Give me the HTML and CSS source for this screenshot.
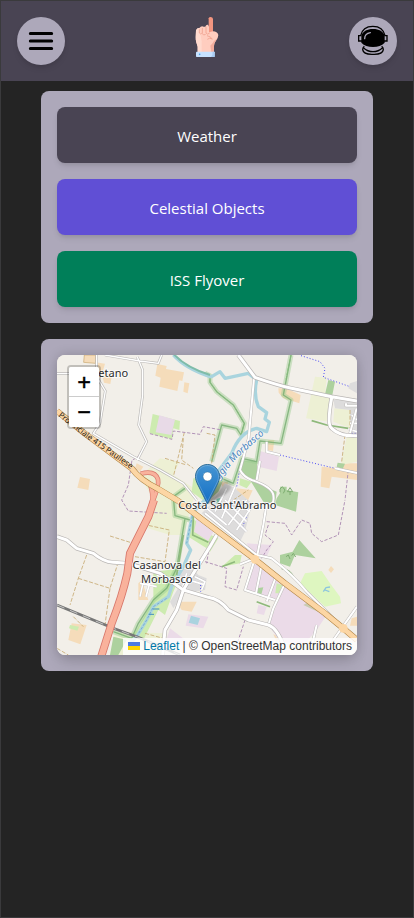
FILE: index.html
```html
<!DOCTYPE html>
<html lang="en">
<head>
<meta charset="utf-8">
<meta name="viewport" content="width=device-width, initial-scale=1">
<title>Sky Guide</title>
<link rel="stylesheet" href="styles.css">
</head>
<body>
<header class="topbar">
  <button class="round-button" type="button" aria-label="Menu">
    <svg class="icon" viewBox="75 75 96 96" aria-hidden="true"><g stroke="#000" stroke-width="9" stroke-linecap="round"><path d="M91 100.500H155M91 123H155M91 145.500H155"/></g></svg>
  </button>
  <svg class="logo" viewBox="21 51 120 120" aria-hidden="true">
    <path fill="#f29580" d="M86 55Q87 51 92 51Q98 51 99 56V96L86 110Z"/>
    <path fill="#ffcdbf" d="M76 80Q78 73 84 74L87 80V97L99 94Q112 94 115 105Q115 115 106 125Q102 130 102 138V156H53V140L47 119L48 91Q51 84 58 84Q64 76 71 80Z"/>
    <path fill="#ffdace" d="M53 140Q47 128 47 112L48 91Q51 84 58 84L65 124V156H53Z"/>
    <path fill="#f3ad9d" d="M91 137Q99 130 102 123Q107 118 111 116Q102 128 102 138V156H94Z"/>
    <path fill="none" stroke="#efa18e" stroke-width="2.500" d="M58 88V99Q61 104 65 100M67 84V101Q70 108 77 103M78 80V99Q82 106 89 99M81 107Q91 109 97 117Q88 112 82 118"/>
    <rect x="48" y="155" width="56" height="16" rx="2" fill="#c7e2ff"/>
    <path fill="#a8ccf3" d="M98 155H104V171H93Q99 165 98 155Z"/>
    <circle cx="59" cy="163" r="2.500" fill="#4aa1e4"/>
  </svg>
  <button class="round-button" type="button" aria-label="Profile">
    <svg class="icon" viewBox="69 75 96 96" aria-hidden="true">
      <g fill="none" stroke="#000" stroke-width="4">
        <path d="M80 107Q86 79 116.500 79Q147 79 153 107M82 107H74V123H84M151 107H159V123H149M91 139Q86 143 86 149Q88 164 117 163Q146 164 148 149Q148 143 143 139"/>
        <path d="M88 143Q101 155 117 155Q133 155 146 143"/>
      </g>
      <path d="M117 87C136 87 145 94 152 105V128C143 137 132 141 117 141C102 141 91 137 82 128V105C89 94 98 87 117 87Z"/>
      <path d="M92 116Q92 101 109 98" fill="none" stroke="#ada8ba" stroke-width="4" stroke-linecap="round"/>
    </svg>
  </button>
</header>
<main class="content">
  <nav class="card menu" aria-label="Sections">
    <button class="action weather" type="button">Weather</button>
    <button class="action celestial" type="button">Celestial Objects</button>
    <button class="action iss" type="button">ISS Flyover</button>
  </nav>
  <section class="card" aria-label="Location map">
    <div class="map">
      <svg class="tiles" viewBox="21 30 900 900" preserveAspectRatio="xMidYMid slice">
        <defs>
          <path id="highway" d="M21 198L100 262L245 370Q270 405 325 432L385 468L465 530L615 643L705 715L825 805L880 850L921 885"/>
          <path id="motorway" d="M312 465L295 515L240 625L232 685Q217 753 185 835L152 940"/>
          <path id="slip" d="M272 386Q315 375 324 403Q328 420 308 470M300 420Q310 440 306 480"/>
          <path id="town-road" d="M21 575L50 585L80 610L130 625Q160 650 190 652L235 655L330 685L400 735L475 757Q510 763 535 795L595 825L655 840Q680 848 700 900"/>
          <path id="north-road" d="M565 30Q595 70 615 97Q680 120 725 130L845 155L921 168M845 158Q830 240 845 250Q870 275 921 272"/>
          <path id="south-road" d="M500 570L480 605L430 685L400 735L380 795L345 855L338 930"/>
          <path id="lanes" d="M21 86H103M140 30V95L166 138L150 235L130 265L250 335L330 375L400 415L440 465M165 30L270 48L325 55L335 30M262 36L278 75V150L266 240L290 290L262 345"/>
          <path id="east-lanes" d="M612 100L596 280L570 375Q580 395 605 405Q665 425 670 450Q675 485 650 475L640 540L620 640M630 348L620 405M650 290V320L690 330M855 370L921 384M888 175V182H921M920 190L900 265M615 640L585 735L675 765M635 660L618 745M680 690L650 770M705 715L670 790L655 840M465 505L620 630L665 640Q730 690 770 740L860 830M800 840L785 905M921 785L850 885M615 640L570 658"/>
          <path id="streets" d="M505 475L590 560M525 465L590 530M530 430L495 500M550 465L600 500M535 540L590 465M560 555L605 485M515 520L555 425M470 490L530 540M270 715L320 725M280 710L270 755M300 710L288 755M320 690L390 715M410 685L395 735M435 695L465 710L455 735M400 700L460 718M900 235H921M905 210L921 225M895 252L921 260"/>
          <path id="river" d="M370 30Q405 70 480 95L485 95L510 80L525 100L595 85L620 105Q610 150 625 185L650 203L645 222L658 232L650 260L620 250Q570 260 545 325L500 385L465 465L430 500L420 545L410 595L422 615L400 665L365 725L355 755L310 785L290 825L260 875L240 895"/>
          <path id="reserve" d="M723 30L700 150L723 165L693 295L630 288L620 350L575 340L550 415L515 400M465 85L480 92V112L500 140L550 180L583 235L573 270L560 250L515 240L485 350M405 430L370 455L375 512L420 525M405 520L380 670L350 730L310 765L265 835L245 880L190 860"/>
          <path id="rail" d="M21 780L190 850L265 877L390 930"/>
          <path id="highway-label" d="M24 213L104 275L260 385"/>
          <path id="river-label" d="M508 404L560 340L665 248"/>
        </defs>
        <rect x="21" y="30" width="900" height="900" fill="#f2efe9"/>
        <g fill="#f5dcba">
          <path stroke="#c9a66b" stroke-width="2" d="M103 30H137V55L101 52Z"/>
          <path d="M137 52L165 56L158 80L185 95L181 117L162 113L156 91L137 80ZM322 57L350 63L348 72L402 82L397 108L388 106L382 138L328 125L332 98L316 92ZM403 112L418 115L413 145L400 140ZM90 396L120 402L115 435L82 428ZM685 130H708L752 150L748 175L700 160L686 143ZM655 285H673L669 318L652 315ZM815 365L865 370L880 355L921 355V405L845 395L838 430L812 425ZM560 430L608 436L590 475L555 460ZM65 835L110 840L91 898L55 885ZM265 715L275 705L295 765H265ZM380 770H440L425 800L395 795ZM843 663L852 673L843 684L835 675ZM670 868L690 875L680 890ZM905 820L921 815V842H900ZM510 410H535L525 440ZM260 355L280 365L270 380L255 370Z"/>
        </g>
        <g fill="#ebdbe8">
          <path d="M440 520L490 560L475 590L425 555ZM590 595L665 600L650 635L610 630ZM615 655L705 717L675 765L585 735ZM705 720L830 810L800 855L760 900L690 890L655 840ZM630 318L687 335L680 378L625 365ZM415 808L475 815L460 850L407 842ZM360 850L425 900H345ZM625 780L650 785L642 810L620 805Z"/>
        </g>
        <g fill="#edf0d4">
          <path d="M330 340L388 352L370 390L440 435L430 465L400 570H360L280 545L315 470L270 395ZM795 95L830 98L825 150L850 160L837 230L768 220ZM853 190L903 195L901 250L850 230ZM890 275H921V350L873 360ZM195 860L340 865V930H180Z"/>
        </g>
        <g fill="#cdebb0">
          <path d="M308 207L390 228L388 255L370 250L366 283L298 265ZM430 400H475L465 470L425 440ZM425 515L480 570L470 610L415 575ZM310 680L400 670L370 740L345 810L325 795L280 885L245 880L310 765ZM570 400L605 410L590 430L568 420ZM680 715L697 720L686 745H676ZM465 590L482 570L505 580L480 620ZM60 840L87 845L82 857L57 850ZM555 630L575 630L570 655L515 665Z"/>
          <path fill="#def6c0" d="M765 685L815 678L840 715L870 755L873 775L825 785L750 715Z"/>
        </g>
        <path fill="#e8dae7" d="M328 211L375 224L364 270L317 262Z"/>
        <path fill="#ebdbe8" d="M440 525L488 562L475 588L432 560Z"/>
        <g fill="#add19e">
          <path d="M835 105L855 110L847 150L825 148ZM575 345L622 350L620 405L595 400L570 375ZM690 425H710V435L745 442L738 500L675 480L680 460L690 445ZM690 630L728 620L748 585L797 640L735 630L720 665L690 655ZM620 730L640 727L632 755L617 748ZM863 353L885 356L878 372L860 365ZM190 875L230 885L205 930H180ZM470 410L520 405L505 440L470 470ZM600 405L680 440L675 480L640 470Z"/>
          <path fill="#c9cbb2" d="M760 780L785 765L830 805L810 803Z"/>
        </g>
        <g fill="#dddcdc">
          <path d="M480 480L525 415L555 430L605 475L585 560L570 590L455 505ZM900 115L921 108V270H900V195L855 190L850 165H921V145L895 130ZM375 680L425 665L445 690L470 700L465 735L400 745L370 790L360 770L390 720Z"/>
        </g>
        <path fill="#aad3df" d="M423 812L450 820L443 840L416 833Z"/>
        <path fill="#72b7a4" d="M500 462L517 457L512 477H497Z"/>
        <g fill="none" stroke-linejoin="round">
          <use href="#reserve" stroke="#9ccb90" stroke-opacity=".45" stroke-width="15"/>
          <use href="#reserve" stroke="#76ad70" stroke-opacity=".8" stroke-width="4"/>
          <path stroke="#85bc7b" stroke-width="3" stroke-dasharray="9 4" d="M465 86L480 95V112L500 140L550 180L583 235L573 270M723 30L708 105"/>
          <use href="#river" stroke="#a9d4de" stroke-width="10"/>
          <path stroke="#7fbca9" stroke-width="6" d="M370 26Q405 66 480 90"/>
          <path stroke="#79aed0" stroke-width="3" stroke-dasharray="8 5" d="M430 500L420 545L410 595M350 760L310 785L290 825L260 875"/>
          <g stroke="#8eb97b" stroke-width="5"><path d="M430 515L428 570L475 592M400 570L380 690M785 227L830 240L895 250M695 670Q720 675 730 695M515 665L555 650M620 770L660 785"/></g>
          <g stroke="#c6aa72" stroke-width="2.500" stroke-dasharray="12 5">
            <path d="M180 573L250 595M110 630L85 700L60 780M85 700L180 730L202 660M180 730L165 840M70 815L100 845M255 635L345 650L358 555L290 540M403 262L370 395M400 280L395 345L430 370M345 340L410 360M21 910L55 930M900 195V250M885 270L875 350M470 265L495 270L485 355M285 865L340 880M550 465L595 435"/>
          </g>
          <g stroke="#b294b7" stroke-width="3" stroke-dasharray="10 5">
            <path d="M290 290L262 338L246 345L235 420L215 465L235 498L350 505M300 266L366 283L370 258L450 268L460 245L515 255M650 530L705 535L725 570L755 525L780 535L785 565L815 590L865 570L885 465M895 375L885 465M655 540L645 570L670 590L650 615L635 640M465 650L530 670L525 725L560 735L580 665M480 590L470 655M515 770L535 795L585 825L560 900"/>
          </g>
          <g stroke="#4c4cf4" stroke-width="3" stroke-dasharray="3 6">
            <path d="M753 32L810 50L825 70L820 97L900 125M690 330L855 370M592 290L570 370L560 425M595 500L578 545M905 265H921M452 720V740"/>
          </g>
          <use href="#rail" stroke="#777" stroke-width="8"/>
          <use href="#rail" stroke="#efefef" stroke-width="2" stroke-dasharray="24 18"/>
          <use href="#streets" stroke="#c5c3c5" stroke-width="7"/>
          <use href="#streets" stroke="#fff" stroke-width="5"/>
          <use href="#lanes" stroke="#bdbbb9" stroke-width="8"/>
          <use href="#lanes" stroke="#fff" stroke-width="4"/>
          <use href="#east-lanes" stroke="#bdbbb9" stroke-width="9"/>
          <use href="#east-lanes" stroke="#fff" stroke-width="6"/>
          <use href="#town-road" stroke="#b9b6b4" stroke-width="13"/>
          <use href="#south-road" stroke="#b9b6b4" stroke-width="13"/>
          <use href="#north-road" stroke="#b9b6b4" stroke-width="13"/>
          <use href="#town-road" stroke="#fff" stroke-width="9"/>
          <use href="#south-road" stroke="#fff" stroke-width="9"/>
          <use href="#north-road" stroke="#fff" stroke-width="9"/>
          <use href="#slip" stroke="#d7776b" stroke-width="14"/>
          <use href="#slip" stroke="#f9b29c" stroke-width="10"/>
          <use href="#highway" stroke="#b08242" stroke-width="18"/>
          <use href="#highway" stroke="#fcd6a4" stroke-width="15"/>
          <use href="#motorway" stroke="#d7776b" stroke-width="24"/>
          <use href="#motorway" stroke="#f9b29c" stroke-width="19"/>
          <path stroke="#f9b29c" stroke-width="10" d="M308 435L306 490"/>
          <path stroke="#418fbe" stroke-width="3" d="M308 792H328M296 808H312"/>
          <path stroke="#8dc5dd" stroke-width="4" d="M820 740L828 728L840 726M825 735L838 740"/>
          <path stroke="#7eac71" stroke-width="3" d="M690 442V432L697 425L705 435L700 445M712 440L720 428L728 440ZM720 440V450M708 635L715 630L720 642M725 632L730 625L737 636"/>
        </g>
        <circle cx="615" cy="643" r="13" fill="#fcd6a4"/>
        <circle cx="880" cy="850" r="13" fill="#fcd6a4"/>
        <g class="place">
          <text x="145" y="95">etano</text>
          <text x="532" y="493" text-anchor="middle">Costa Sant'Abramo</text>
          <text x="350" y="671" text-anchor="middle">Casanova del</text>
          <text x="350" y="714" text-anchor="middle">Morbasco</text>
        </g>
        <text class="road-name"><textPath href="#highway-label">Provinciale 415 Paullese</textPath></text>
        <text class="river-name"><textPath href="#river-label">ggia Morbasco</textPath></text>
      </svg>
      <svg class="pin" viewBox="0 0 41 41" aria-label="Selected location" role="img">
        <defs>
          <linearGradient id="pin-fill" x1="0" y1="0" x2="0" y2="1"><stop offset="0" stop-color="#4695d2"/><stop offset="1" stop-color="#126fc6"/></linearGradient>
          <linearGradient id="pin-shadow" x1="0" y1="1" x2="1" y2="0"><stop offset="0" stop-opacity=".5"/><stop offset="1" stop-opacity=".1"/></linearGradient>
          <filter id="soften"><feGaussianBlur stdDeviation="1"/></filter>
        </defs>
        <path fill="url(#pin-shadow)" filter="url(#soften)" d="M12 40L18 25Q23 16 33 17Q40 20 34 27Q29 32 12 40Z"/>
        <path fill="url(#pin-fill)" stroke="#2e6c97" d="M12.500.500C5.900.500.500 5.900.500 12.500C.500 15.200 1.300 17.700 3 21L12.500 40L22 21C23.700 17.700 24.500 15.200 24.500 12.500C24.500 5.900 19.100.500 12.500.500Z"/>
        <path fill="none" stroke="#fff" stroke-opacity=".2" d="M12.500 1.500C6.400 1.500 1.500 6.400 1.500 12.500C1.500 15 2.300 17.500 4 20.600L12.500 37.500L21 20.600C22.700 17.500 23.500 15 23.500 12.500C23.500 6.400 18.600 1.500 12.500 1.500Z"/>
        <circle cx="12.500" cy="12.500" r="4.500" fill="#fff" stroke="#2e6c97" stroke-opacity=".5"/>
      </svg>
      <div class="zoom">
        <button type="button" aria-label="Zoom in">+</button>
        <button type="button" aria-label="Zoom out">−</button>
      </div>
      <div class="attribution">
        <a href="https://leafletjs.com"><svg class="flag" viewBox="0 0 12 8" aria-hidden="true"><path fill="#4c7be1" d="M0 0h12v4H0z"/><path fill="#ffd500" d="M0 4h12v4H0z"/></svg> Leaflet</a> | © OpenStreetMap contributors
      </div>
    </div>
  </section>
</main>
</body>
</html>
```
FILE: styles.css
```css
* {
  box-sizing: border-box;
}

body {
  margin: 0;
  min-height: 100vh;
  border: 1px solid #3a3a3c;
  background: #242424;
  font-family: "Open Sans", "Noto Sans", sans-serif;
}

button {
  border: 0;
  cursor: pointer;
}

.topbar {
  display: flex;
  align-items: center;
  justify-content: space-between;
  height: 80px;
  padding: 0 16px;
  background: #494453;
}

.round-button {
  display: grid;
  place-items: center;
  width: 48px;
  height: 48px;
  padding: 0;
  border-radius: 50%;
  background: #ada8ba;
  box-shadow: 0 4px 6px -1px rgb(0 0 0 / 10%), 0 2px 4px -2px rgb(0 0 0 / 10%);
}

.icon {
  width: 32px;
  height: 32px;
}

.logo {
  width: 40px;
  height: 40px;
  margin-bottom: 8px;
}

.content {
  display: flex;
  flex-direction: column;
  gap: 16px;
  padding: 10px 40px;
}

.card {
  padding: 16px;
  border-radius: 8px;
  background: #ada8ba;
}

.menu {
  display: flex;
  flex-direction: column;
  gap: 16px;
}

.action {
  height: 56px;
  padding: 2px 16px 0;
  border-radius: 8px;
  color: #fff;
  font-family: inherit;
  font-size: 15px;
  line-height: 24px;
  box-shadow: 0 4px 6px -1px rgb(0 0 0 / 10%), 0 2px 4px -2px rgb(0 0 0 / 10%);
}

.weather {
  background: #494453;
}

.celestial {
  background: #604fd5;
}

.iss {
  background: #007f59;
}

.map {
  position: relative;
  aspect-ratio: 1;
  overflow: hidden;
  border-radius: 8px;
  background: #f2efe9;
  box-shadow: 0 10px 15px -3px rgb(0 0 0 / 12%), 0 0 12px rgb(0 0 0 / 18%);
}

.tiles {
  display: block;
  width: 100%;
  height: 100%;
}

.place {
  fill: #2c2c2c;
  stroke: #fff;
  stroke-opacity: .7;
  stroke-width: 6px;
  paint-order: stroke;
  font: 33px "Noto Sans", sans-serif;
}

.road-name {
  fill: #2a2419;
  font: 24px "Noto Sans", sans-serif;
}

.river-name {
  fill: #4682bd;
  stroke: #fff;
  stroke-opacity: .6;
  stroke-width: 4px;
  paint-order: stroke;
  font: italic 29px "Noto Sans", sans-serif;
}

.pin {
  position: absolute;
  left: calc(50% - 12px);
  bottom: 50%;
  width: 41px;
  height: 41px;
}

.zoom {
  position: absolute;
  top: 10px;
  left: 10px;
  border: 2px solid rgb(0 0 0 / 20%);
  border-radius: 4px;
  background-clip: padding-box;
}

.zoom button {
  display: block;
  width: 30px;
  height: 30px;
  padding: 0;
  background: #fff;
  color: #000;
  font: 22px/30px "DejaVu Sans Mono", monospace;
  -webkit-text-stroke: 0.4px #000;
}

.zoom button:first-child {
  border-bottom: 1px solid #ccc;
  border-radius: 2px 2px 0 0;
}

.zoom button:last-child {
  border-radius: 0 0 2px 2px;
}

.attribution {
  position: absolute;
  right: 0;
  bottom: 0;
  padding: 0 5px;
  background: rgb(255 255 255 / 80%);
  color: #333;
  font: 12px/17px "Liberation Sans", sans-serif;
  white-space: nowrap;
}

.attribution a {
  color: #0078a8;
  text-decoration: none;
}

.flag {
  width: 12px;
  height: 8px;
}
```
